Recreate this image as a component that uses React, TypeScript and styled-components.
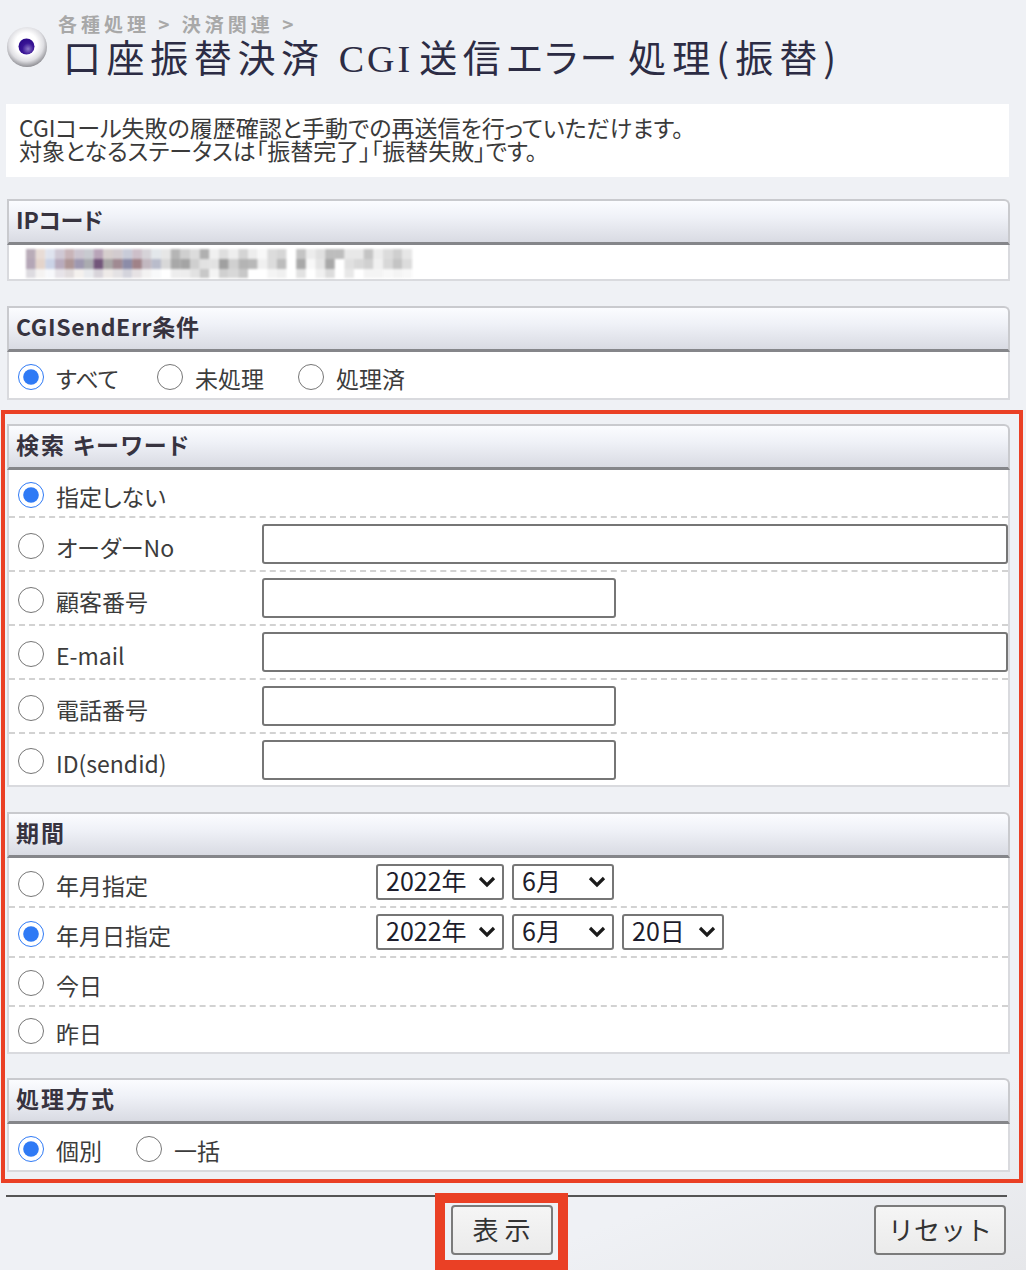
import React from "react";
import styled, { createGlobalStyle } from "styled-components";

const Global = createGlobalStyle`
  html, body { margin: 0; padding: 0; background: #eff1f5; }
  body {
    font-family: "Noto Sans CJK JP", "Liberation Sans", sans-serif;
    font-feature-settings: "palt";
    color: #333;
  }
  * { box-sizing: border-box; }
`;

const Page = styled.div`
  width: 1026px;
  height: 1270px;
  overflow: hidden;
  background: linear-gradient(160deg, #eff1f5 88%, #e6e7ea 100%);
`;

const TitleBlock = styled.header`
  height: 104px;
  padding: 11px 0 0 7px;
  display: grid;
  grid-template-columns: 40px 1fr;
  grid-template-rows: 26px 38px;
`;

const Ball = styled.svg`
  grid-row: 1 / 3;
  width: 40px;
  height: 40px;
  margin-top: 16px;
`;

const Crumb = styled.div`
  padding-left: 11px;
  font-size: 19px;
  line-height: 26px;
  font-weight: 700;
  letter-spacing: 4px;
  color: #a8a8a8;
  white-space: nowrap;
`;

const Title = styled.h1`
  margin: 0;
  padding-left: 16px;
  font-size: 38px;
  line-height: 38px;
  font-weight: 400;
  letter-spacing: 5.6px;
  color: #2c2c44;
  white-space: nowrap;
`;

const Latin = styled.span`
  font-family: "Liberation Serif", serif;
  letter-spacing: 3px;
  margin-right: 6px;
`;

const TightKana = styled.span`
  letter-spacing: 2px;
  margin-right: -5px;
`;

const ProcessPart = styled.span`
  letter-spacing: 6px;
`;

const Intro = styled.div`
  margin: 0 17px 22px 6px;
  height: 73px;
  padding: 12px 13px 0;
  background: #fff;
  font-size: 23px;
  line-height: 23px;
  color: #3a3a3a;
  white-space: nowrap;
`;

const Section = styled.section<{ $gap?: number }>`
  margin: 0 16px ${(p) => p.$gap ?? 25}px 7px;
`;

const HighlightSection = styled(Section)`
  margin: 0 0 ${(p) => p.$gap ?? 25}px 2px;
  width: 1003px;
`;

const Head = styled.h2<{ $track?: number }>`
  margin: 0;
  height: 46px;
  padding-left: 7px;
  border: 2px solid #c9cace;
  border-bottom: 3px solid #85868a;
  border-radius: 0 6px 0 0;
  background: linear-gradient(#fbfcff 0%, #eff1f7 40%, #d9dbe3 100%);
  font-size: 23px;
  line-height: 37px;
  font-weight: 700;
  letter-spacing: ${(p) => p.$track ?? 2}px;
  color: #37333f;
  white-space: nowrap;
`;

const Body = styled.div`
  background: #fff;
  border: 2px solid #d9dade;
  border-top: none;
`;

const IpBody = styled(Body)`
  height: 36px;
  padding: 4px 0 0 17px;
`;

const Mosaic = styled.svg`
  display: block;
  width: 406px;
  height: 29px;
  filter: blur(0.8px);
`;

const InlineRow = styled.div`
  height: 46px;
  display: flex;
  align-items: center;
  padding-left: 10px;
`;

const Row = styled.div<{ $col: number; $h: number }>`
  height: ${(p) => p.$h}px;
  display: grid;
  grid-template-columns: ${(p) => p.$col}px 1fr;
  align-items: center;
  padding-left: 10px;
  border-bottom: 2px dashed #d2d2d2;
  &:last-child { border-bottom: none; }
`;

const Choice = styled.label<{ $gap?: number }>`
  display: inline-flex;
  align-items: center;
  margin-right: ${(p) => p.$gap ?? 0}px;
  font-size: 23px;
  line-height: 30px;
  color: #3c3c3c;
  white-space: nowrap;
`;

const ChoiceText = styled.span`
  margin: 6px 0 0 12px;
`;

const Radio = styled.input.attrs({ type: "radio" })`
  width: 26px;
  height: 26px;
  margin: 3px 0 0 -1px;
  accent-color: #2f7af5;
`;

const TextBox = styled.input.attrs({ type: "text" })<{ $w: number }>`
  display: block;
  width: ${(p) => p.$w}px;
  height: 40px;
  background: #fff;
  border: 2px solid #767676;
  border-radius: 3px;
`;

const Selects = styled.div`
  display: flex;
  gap: 8px;
`;

const SelectBox = styled.div`
  position: relative;
  line-height: 0;
`;

const Select = styled.select<{ $w: number }>`
  appearance: none;
  width: ${(p) => p.$w}px;
  height: 36px;
  padding: 0 0 5px 8px;
  background-color: #fff;
  border: 2px solid #767676;
  border-radius: 3px;
  font-family: "Noto Sans CJK JP", "Liberation Sans", sans-serif;
  font-size: 25px;
  line-height: 29px;
  color: #1d1d2c;
`;

const Chevron = styled.svg`
  position: absolute;
  top: 12px;
  right: 8px;
  width: 18px;
  height: 12px;
  pointer-events: none;
`;

const Highlight = styled.div`
  width: 1022px;
  height: 773px;
  margin: 0 0 12px 1px;
  padding: 10px 0 0;
  border: 4px solid #ea4025;
`;

const Footer = styled.footer`
  margin: 0 19px 0 6px;
  height: 78px;
  border-top: 2px solid #555;
  display: grid;
  grid-template-columns: 429px 133px 1fr;
  align-items: start;
`;

const ButtonFrame = styled.div`
  grid-column: 2;
  margin-top: -4px;
  width: 133px;
  height: 77px;
  border: 10px solid #ea4025;
  background: #eff1f5;
  position: relative;
  display: flex;
  justify-content: center;
  padding-top: 2px;
`;

const PushButton = styled.button<{ $w: number }>`
  width: ${(p) => p.$w}px;
  height: 50px;
  padding: 0 0 3px;
  border: 2px solid #7b7b7b;
  border-radius: 4px;
  background: linear-gradient(#f5f5f5, #ebebeb);
  font-family: "Noto Sans CJK JP", "Liberation Sans", sans-serif;
  font-size: 26px;
  color: #333;
  white-space: nowrap;
`;

const ResetCell = styled.div`
  grid-column: 3;
  justify-self: end;
  margin: 8px 1px 0 0;
`;

const mosaic = [
  "b9acb8 e8dcd6 dfe3ee cfc8d4 c8b4b8 cbc4cf c8cad0 b8a4b8 d6cecd d2cbcf c8cbd8 cdbfc9 d6d3d8 e3e7eb e6e6e6 b5b5b5 cfcfcf dcdcdc b0b0b0 f0f0f0 dedede eeeeee d4d4d4 ededed f8f8f8 dcdcdc d6d6d6 ffffff c4c4c4 ececec e0e0e0 bdbdbd bdbdbd e8e8e8 e8e8e8 c4c4c4 ececec dcdcdc cfcfcf e6e6e6",
  "b4a6b6 e4d4cb cbd3e6 b8abbd ae9696 9e98b0 aaabb0 72567a a9a6a6 a08a92 8c8ca8 a08288 c2b8c0 b9bccb d8d8d8 a8a8a8 a4a4a4 cfcfcf e2e2e2 e2e2e2 a0a0a0 d0d0d0 b4b4b4 b8b8b8 f0f0f0 dcdcdc bcbcbc ffffff a8a8a8 f8f8f8 e4e4e4 a8a8a8 ffffff e0e0e0 d8d8d8 d0d0d0 f0f0f0 d8d8d8 c4c4c4 dcdcdc",
  "dddbe0 f5f3f2 f7f8fb e6e3e8 e1dcdd f4f1ee e9ebee d8d4da eeeae8 e4e2e4 d4d4dc e6e2e4 f3f2f2 f8f9fa ffffff ededed ededed e2e2e2 c8c8c8 f4f4f4 d0d0d0 d8d8d8 c8c8c8 ffffff ffffff f4f4f4 f0f0f0 ffffff e2e2e2 ffffff f0f0f0 dcdcdc ffffff e8e8e8 ffffff f4f4f4 f4f4f4 f8f8f8 f4f4f4 f8f8f8",
].map((r) => r.split(" "));

const Radios = ({ name, value, label }: { name: string; value?: boolean; label: string }) => (
  <Choice>
    <Radio name={name} defaultChecked={value} />
    <ChoiceText>{label}</ChoiceText>
  </Choice>
);

const Dropdown = ({ w, value }: { w: number; value: string }) => (
  <SelectBox>
    <Select $w={w} defaultValue={value}>
      <option>{value}</option>
    </Select>
    <Chevron viewBox="0 0 18 12">
      <polyline points="2,2 9,9 16,2" fill="none" stroke="#1a1a1a" strokeWidth="3.2" />
    </Chevron>
  </SelectBox>
);

const YearMonth = () => (
  <>
    <Dropdown w={128} value="2022年" />
    <Dropdown w={102} value="6月" />
  </>
);

export default function App() {
  return (
    <Page>
      <Global />
      <TitleBlock>
        <Ball viewBox="0 0 40 40">
          <defs>
            <radialGradient id="shell" cx="0.48" cy="0.42" r="0.6">
              <stop offset="0.45" stopColor="#ffffff" />
              <stop offset="0.72" stopColor="#dfdfe3" />
              <stop offset="1" stopColor="#85858a" />
            </radialGradient>
            <radialGradient id="pupil" cx="0.6" cy="0.65" r="0.65">
              <stop offset="0" stopColor="#8e79c9" />
              <stop offset="0.55" stopColor="#3a1596" />
              <stop offset="1" stopColor="#2c0a8a" />
            </radialGradient>
          </defs>
          <circle cx="20" cy="20" r="20" fill="url(#shell)" />
          <circle cx="19.5" cy="19.5" r="8" fill="url(#pupil)" />
        </Ball>
        <Crumb>各種処理 &gt; 決済関連 &gt;</Crumb>
        <Title>口座振替決済 <Latin>CGI</Latin>送信<TightKana>エラー</TightKana> <ProcessPart>処理(振替)</ProcessPart></Title>
      </TitleBlock>

      <Intro>
        CGIコール失敗の履歴確認と手動での再送信を行っていただけます。<br />
        対象となるステータスは「振替完了」「振替失敗」です。
      </Intro>

      <Section>
        <Head $track={-0.2}>IPコード</Head>
        <IpBody>
          <Mosaic viewBox="0 0 406 29">
            {mosaic.map((row, y) =>
              row.map((c, x) => (
                <rect key={`${x}-${y}`} x={x * 9.65} y={y * 10} width="9.8" height="10" fill={`#${c}`} />
              ))
            )}
          </Mosaic>
        </IpBody>
      </Section>

      <Section $gap={10}>
        <Head $track={0.65}>CGISendErr条件</Head>
        <Body>
          <InlineRow>
            <Choice $gap={39}><Radio name="cond" defaultChecked /><ChoiceText>すべて</ChoiceText></Choice>
            <Choice $gap={35}><Radio name="cond" /><ChoiceText>未処理</ChoiceText></Choice>
            <Choice><Radio name="cond" /><ChoiceText>処理済</ChoiceText></Choice>
          </InlineRow>
        </Body>
      </Section>

      <Highlight>
        <HighlightSection>
          <Head>検索 キーワード</Head>
          <Body>
            <Row $col={243} $h={48}><Radios name="kw" value label="指定しない" /></Row>
            <Row $col={243} $h={54}><Radios name="kw" label="オーダーNo" /><TextBox $w={746} /></Row>
            <Row $col={243} $h={54}><Radios name="kw" label="顧客番号" /><TextBox $w={354} /></Row>
            <Row $col={243} $h={54}><Radios name="kw" label="E-mail" /><TextBox $w={746} /></Row>
            <Row $col={243} $h={54}><Radios name="kw" label="電話番号" /><TextBox $w={354} /></Row>
            <Row $col={243} $h={51}><Radios name="kw" label="ID(sendid)" /><TextBox $w={354} /></Row>
          </Body>
        </HighlightSection>

        <HighlightSection $gap={24}>
          <Head>期間</Head>
          <Body>
            <Row $col={357} $h={50}>
              <Radios name="term" label="年月指定" />
              <Selects><YearMonth /></Selects>
            </Row>
            <Row $col={357} $h={50}>
              <Radios name="term" value label="年月日指定" />
              <Selects>
                <YearMonth />
                <Dropdown w={102} value="20日" />
              </Selects>
            </Row>
            <Row $col={357} $h={49}><Radios name="term" label="今日" /></Row>
            <Row $col={357} $h={45}><Radios name="term" label="昨日" /></Row>
          </Body>
        </HighlightSection>

        <HighlightSection $gap={0}>
          <Head>処理方式</Head>
          <Body>
            <InlineRow>
              <Choice $gap={35}><Radio name="mode" defaultChecked /><ChoiceText>個別</ChoiceText></Choice>
              <Choice><Radio name="mode" /><ChoiceText>一括</ChoiceText></Choice>
            </InlineRow>
          </Body>
        </HighlightSection>
      </Highlight>

      <Footer>
        <ButtonFrame><PushButton $w={102}>表 示</PushButton></ButtonFrame>
        <ResetCell><PushButton $w={132}>リセット</PushButton></ResetCell>
      </Footer>
    </Page>
  );
}
